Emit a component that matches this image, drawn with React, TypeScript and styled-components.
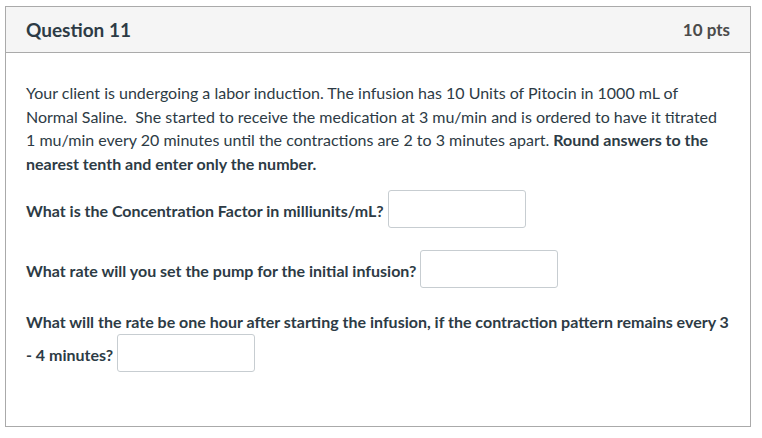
import React from "react";
import styled, { createGlobalStyle } from "styled-components";

const Global = createGlobalStyle`
  html, body { margin: 0; padding: 0; background: #fff; }
  body { font-family: Lato, "Open Sans", sans-serif; color: #2d3b45; }
`;

const Page = styled.div`
  padding: 6px 11px 0 5px;
`;

const Card = styled.section`
  border: 1px solid #aaaaaa;
  height: 421px;
  box-sizing: border-box;
`;

const Header = styled.header`
  display: flex;
  justify-content: space-between;
  align-items: center;
  height: 46px;
  padding: 0 20px;
  background: #f5f5f5;
  border-bottom: 1px solid #aaaaaa;
  box-sizing: border-box;
`;

const Title = styled.h2`
  margin: 0;
  font-size: 19px;
  font-weight: 700;
  color: #2d3b45;
`;

const Points = styled.span`
  font-size: 17px;
  font-weight: 700;
  color: #4b4b4b;
`;

const Body = styled.div`
  padding: 28px 20px 0 20px;
  font-size: 16px;
  line-height: 23.7px;
  color: #2d3b45;
`;

const Para = styled.p`
  margin: 0 0 14px 0;
`;

const Question = styled.p`
  margin: 0 0 14px 0;
  font-weight: 700;
`;

const Answer = styled.input`
  display: inline-block;
  vertical-align: middle;
  box-sizing: border-box;
  width: 138px;
  height: 38px;
  margin: 0 0 8px 4px;
  border: 1px solid #c7cdd1;
  border-radius: 3px;
  background: #fff;
  font: inherit;
  outline: none;
`;

export default function App() {
  return (
    <Page>
      <Global />
      <Card>
        <Header>
          <Title>Question 11</Title>
          <Points>10 pts</Points>
        </Header>
        <Body>
          <Para>
            Your client is undergoing a labor induction. The infusion has 10 Units of Pitocin in 1000 mL of
            Normal Saline.&nbsp; She started to receive the medication at 3 mu/min and is ordered to have it titrated
            1 mu/min every 20 minutes until the contractions are 2 to 3 minutes apart.{" "}
            <b>Round answers to the nearest tenth and enter only the number.</b>
          </Para>
          <Question>
            What is the Concentration Factor in milliunits/mL?
            <Answer type="text" />
          </Question>
          <Question>
            What rate will you set the pump for the initial infusion?
            <Answer type="text" />
          </Question>
          <Question>
            What will the rate be one hour after starting the infusion, if the contraction pattern remains every 3
            - 4 minutes?
            <Answer type="text" />
          </Question>
        </Body>
      </Card>
    </Page>
  );
}
